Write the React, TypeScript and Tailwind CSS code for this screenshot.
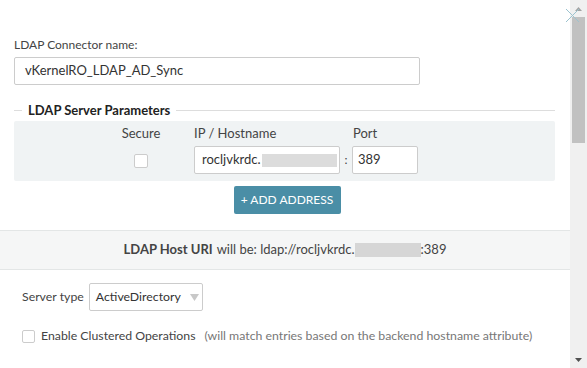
import React from "react";

export default function App() {
  return (
    <div
      className="relative flex w-[587px] h-[368px] overflow-hidden bg-white text-[#333] text-[12px]"
      style={{ fontFamily: "Lato, 'Open Sans', sans-serif" }}
    >
      {/* ===== CONTENT ===== */}
      <div className="w-[570px] shrink-0">
        <div className="px-[14px] pt-[37px]">
          <label className="block leading-[16px] text-[#444]">LDAP Connector name:</label>
          <div className="mt-[4px] w-[406px] h-[28px] border border-[#ccc] rounded-[2px] flex items-center px-[10px] text-[13px] text-[#333]">
            vKernelRO_LDAP_AD_Sync
          </div>

          {/* ===== SERVER PARAMETERS ===== */}
          <div className="mt-[17px] flex items-center w-[541px]">
            <div className="w-[8px] h-px bg-[#ddd]" />
            <span className="px-[6px] font-bold text-[13px] leading-[16px] text-[#222]">
              LDAP Server Parameters
            </span>
            <div className="flex-1 h-px bg-[#ddd]" />
          </div>
          <div className="mt-[3px] w-[541px] h-[60px] bg-[#f0f3f4] rounded-[2px] flex text-[#444]">
            <div className="w-[254px] flex flex-col items-center pl-[200px] ml-[-100px]">
              <span className="mt-[4px] leading-[16px] text-[13px]">Secure</span>
              <div className="mt-[13px] w-[14px] h-[14px] bg-white border border-[#ccc] rounded-[2px]" />
            </div>
            <div className="ml-[26px] flex flex-col">
              <span className="mt-[4px] leading-[16px] text-[13px]">IP / Hostname</span>
              <div className="mt-[5px] w-[146px] h-[28px] bg-white border border-[#ccc] rounded-[2px] flex items-center pl-[7px] text-[13px] text-[#333]">
                rocljvkrdc.
                <span className="ml-[1px] w-[75px] h-[13px] bg-[#dcdcdc]" />
              </div>
            </div>
            <div className="flex flex-col">
              <span className="mt-[4px] leading-[16px] opacity-0">:</span>
              <span className="mt-[5px] h-[28px] w-[12px] flex items-center justify-center">:</span>
            </div>
            <div className="flex flex-col">
              <span className="mt-[4px] leading-[16px] text-[13px] pl-[1px]">Port</span>
              <div className="mt-[5px] w-[66px] h-[28px] bg-white border border-[#ccc] rounded-[2px] flex items-center pl-[5px] text-[13px] text-[#333]">
                389
              </div>
            </div>
          </div>
          <div className="mt-[5px] flex justify-center w-[541px]">
            <button className="ml-[5px] w-[107px] h-[28px] bg-[#4a8ea6] text-white text-[12px] rounded-[2px]">
              + ADD ADDRESS
            </button>
          </div>
        </div>

        {/* ===== HOST URI ===== */}
        <div className="mt-[16px] h-[40px] bg-[#f5f6f6] border-y border-[#e3e6e6] flex items-center justify-center text-[13px] text-[#444]">
          <span className="font-bold mr-[4px]">LDAP Host URI</span>
          <span>will be: ldap://rocljvkrdc.</span>
          <span className="w-[66px] h-[14px] bg-[#d6d6d6]" />
          <span>:389</span>
        </div>

        {/* ===== SERVER TYPE ===== */}
        <div className="pl-[22px] mt-[13px] flex items-center">
          <span className="text-[12.3px] text-[#444]">Server type</span>
          <div className="ml-[5px] w-[114px] h-[28px] border border-[#ccc] rounded-[2px] flex items-center pl-[6px] text-[12.3px] text-[#333]">
            ActiveDirectory
            <svg className="ml-[9px]" width="9" height="7" viewBox="0 0 9 7">
              <path d="M0 0 H9 L4.5 7 Z" fill="#c8c8c8" />
            </svg>
          </div>
        </div>

        <div className="pl-[22px] mt-[16px] flex items-center text-[12.3px]">
          <div className="w-[13px] h-[13px] border border-[#ccc] rounded-[2px] bg-white" />
          <span className="ml-[6px] text-[#444]">Enable Clustered Operations</span>
          <span className="ml-[9px] text-[#777]">(will match entries based on the backend hostname attribute)</span>
        </div>
      </div>

      {/* ===== SCROLLBAR ===== */}
      <div className="w-[17px] h-full bg-[#f0f0f0] flex flex-col items-center">
        <svg className="mt-[7px]" width="7" height="4" viewBox="0 0 7 4">
          <path d="M3.5 0 L7 4 H0 Z" fill="#a3a3a3" />
        </svg>
        <div className="mt-[6px] w-[13px] h-[126px] bg-[#c1c1c1]" />
        <div className="flex-1" />
        <svg className="mb-[6px]" width="7" height="4" viewBox="0 0 7 4">
          <path d="M0 0 H7 L3.5 4 Z" fill="#505050" />
        </svg>
      </div>

      {/* ===== CLOSE ===== */}
      <svg className="absolute left-[565px] top-[8px]" width="15" height="15" viewBox="0 0 15 15">
        <path d="M1 1 L14 14 M14 1 L1 14" stroke="#9cc3cf" strokeWidth="1" />
      </svg>
    </div>
  );
}
